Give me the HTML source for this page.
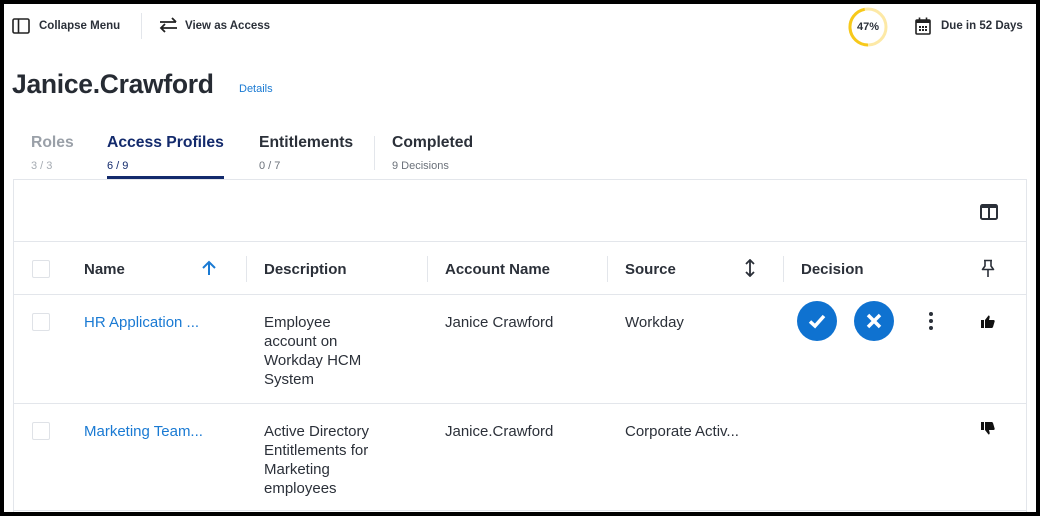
<!DOCTYPE html>
<html><head><meta charset="utf-8"><style>
*{margin:0;padding:0;box-sizing:border-box}
body{width:1040px;height:516px;overflow:hidden;background:#000;font-family:"Liberation Sans",sans-serif;color:#2b3039;position:relative}
#pg{position:absolute;left:4px;top:4px;width:1032px;height:508px;background:#fff;overflow:hidden}
.a{position:absolute;white-space:nowrap}
.b{font-weight:bold}
.hd{font-size:15px;font-weight:bold;color:#2b3039}
.cell{font-size:15px;line-height:19px;color:#2b3039}
.lnk{color:#1a7ad3;font-size:15px}
.vd{position:absolute;width:1px;background:#e3e6eb}
.hl{position:absolute;height:1px;background:#e3e6eb}
.cb{position:absolute;width:18px;height:18px;border:1px solid #dfe2e7;border-radius:2px}
.tab{font-size:15.7px;font-weight:bold}
</style></head><body><div id="pg">
<svg class="a" style="left:8px;top:14px" width="18" height="16" viewBox="0 0 18 16"><rect x="1" y="1" width="16" height="14" rx="1.5" fill="none" stroke="#222" stroke-width="1.6"/><line x1="6.5" y1="1" x2="6.5" y2="15" stroke="#222" stroke-width="1.6"/></svg>
<div class="a b" style="left:35px;top:16px;font-size:11.5px;color:#2b3039">Collapse Menu</div>
<div class="vd" style="left:137px;top:9px;height:26px"></div>
<svg class="a" style="left:155px;top:13px" width="19" height="16" viewBox="0 0 19 16"><path d="M1 5H17M13 1L17 5M18 11H2M6 7L2 11L6 15" fill="none" stroke="#222" stroke-width="1.8"/></svg>
<div class="a b" style="left:181px;top:16px;font-size:11.5px;color:#2b3039">View as Access</div>
<svg class="a" style="left:844px;top:3px" width="40" height="40" viewBox="0 0 40 40"><circle cx="20" cy="20" r="18" fill="none" stroke="#fde9a6" stroke-width="3"/><path d="M20 2A18 18 0 0 1 23.3 37.7" fill="none" stroke="#f7c91b" stroke-width="3" transform="rotate(180 20 20)"/></svg>
<div class="a b" style="left:851px;top:17px;font-size:11px;width:26px;text-align:center">47%</div>
<svg class="a" style="left:911px;top:13px" width="16" height="18" viewBox="0 0 16 18"><rect x="1" y="3" width="14" height="14" rx="1" fill="none" stroke="#222" stroke-width="1.6"/><rect x="1" y="3" width="14" height="3" fill="#222"/><line x1="4.5" y1="0.5" x2="4.5" y2="4" stroke="#222" stroke-width="1.6"/><line x1="11.5" y1="0.5" x2="11.5" y2="4" stroke="#222" stroke-width="1.6"/><g fill="#222"><rect x="4" y="9" width="2" height="2"/><rect x="7" y="9" width="2" height="2"/><rect x="10" y="9" width="2" height="2"/><rect x="4" y="12" width="2" height="2"/><rect x="7" y="12" width="2" height="2"/><rect x="10" y="12" width="2" height="2"/></g></svg>
<div class="a b" style="left:937px;top:16px;font-size:11.5px">Due in 52 Days</div>
<div class="a b" style="left:8px;top:65px;font-size:26.5px;color:#262b33;letter-spacing:-0.3px">Janice.Crawford</div>
<div class="a" style="left:235px;top:79px;font-size:11px;color:#1a7ad3">Details</div>
<div class="a tab" style="left:27px;top:130px;color:#9aa0a8">Roles</div>
<div class="a" style="left:27px;top:156px;font-size:11px;color:#a5abb2">3 / 3</div>
<div class="a tab" style="left:103px;top:130px;color:#132a6c">Access Profiles</div>
<div class="a" style="left:103px;top:156px;font-size:11px;color:#132a6c">6 / 9</div>
<div class="a" style="left:103px;top:172px;width:117px;height:3px;background:#132a6c"></div>
<div class="a tab" style="left:255px;top:130px">Entitlements</div>
<div class="a" style="left:255px;top:156px;font-size:11px;color:#6b717a">0 / 7</div>
<div class="vd" style="left:370px;top:132px;height:34px"></div>
<div class="a tab" style="left:388px;top:130px">Completed</div>
<div class="a" style="left:388px;top:156px;font-size:11px;color:#6b717a">9 Decisions</div>
<div class="a" style="left:9px;top:175px;width:1014px;height:340px;border:1px solid #e3e6eb"></div>
<svg class="a" style="left:976px;top:200px" width="18" height="16" viewBox="0 0 18 16"><rect x="1" y="1" width="16" height="14" rx="1.5" fill="none" stroke="#2b3039" stroke-width="2"/><rect x="1" y="1" width="16" height="3" fill="#2b3039"/><line x1="9" y1="1" x2="9" y2="15" stroke="#2b3039" stroke-width="2"/></svg>
<div class="hl" style="left:10px;top:237px;width:1012px"></div>
<div class="cb" style="left:28px;top:256px"></div>
<div class="a hd" style="left:80px;top:257px">Name</div>
<svg class="a" style="left:197px;top:256px" width="16" height="16" viewBox="0 0 16 16"><path d="M8 15V2M2 8L8 2L14 8" fill="none" stroke="#1a7ad3" stroke-width="2"/></svg>
<div class="vd" style="left:242px;top:252px;height:26px"></div>
<div class="a hd" style="left:260px;top:257px">Description</div>
<div class="vd" style="left:423px;top:252px;height:26px"></div>
<div class="a hd" style="left:441px;top:257px">Account Name</div>
<div class="vd" style="left:603px;top:252px;height:26px"></div>
<div class="a hd" style="left:621px;top:257px">Source</div>
<svg class="a" style="left:740px;top:255px" width="12" height="18" viewBox="0 0 12 18"><path d="M6 1V17M2 5L6 1L10 5M2 13L6 17L10 13" fill="none" stroke="#2b3039" stroke-width="1.8"/></svg>
<div class="vd" style="left:779px;top:252px;height:26px"></div>
<div class="a hd" style="left:797px;top:257px">Decision</div>
<svg class="a" style="left:977px;top:255px" width="14" height="19" viewBox="0 0 14 19"><path d="M3 1.5H11M4 1.5V7L1.5 10.5H12.5L10 7V1.5M7 10.5V18" fill="none" stroke="#2b3039" stroke-width="1.6" stroke-linejoin="round"/></svg>
<div class="hl" style="left:10px;top:290px;width:1012px"></div>
<div class="cb" style="left:28px;top:309px"></div>
<div class="a lnk" style="left:80px;top:310px">HR Application ...</div>
<div class="a cell" style="left:260px;top:309px;white-space:normal;width:140px">Employee<br>account on<br>Workday HCM<br>System</div>
<div class="a cell" style="left:441px;top:309px">Janice Crawford</div>
<div class="a cell" style="left:621px;top:309px">Workday</div>
<div class="a" style="left:793px;top:297px;width:40px;height:40px;border-radius:50%;background:#0f72d0"></div>
<svg class="a" style="left:793px;top:297px" width="40" height="40" viewBox="0 0 40 40"><path d="M13 20.5L18 25L27 15" fill="none" stroke="#fff" stroke-width="3.5"/></svg>
<div class="a" style="left:850px;top:297px;width:40px;height:40px;border-radius:50%;background:#0f72d0"></div>
<svg class="a" style="left:850px;top:297px" width="40" height="40" viewBox="0 0 40 40"><path d="M14 14L26 26M26 14L14 26" fill="none" stroke="#fff" stroke-width="3.5"/></svg>
<svg class="a" style="left:923px;top:307px" width="8" height="20" viewBox="0 0 8 20"><circle cx="4" cy="3" r="2" fill="#2b3039"/><circle cx="4" cy="10" r="2" fill="#2b3039"/><circle cx="4" cy="17" r="2" fill="#2b3039"/></svg>
<svg class="a" style="left:977px;top:311px" width="14" height="13" viewBox="0 0 14 13"><rect x="0" y="5" width="3" height="8" fill="#111"/><path d="M4 5L7.5 0.5C8.5 0.5 9 1.5 8.5 3L8 5H12.5C13.5 5 14 6 13.5 7L12 12C11.7 12.7 11 13 10.5 13H4Z" fill="#111"/></svg>
<div class="hl" style="left:10px;top:399px;width:1012px"></div>
<div class="cb" style="left:28px;top:418px"></div>
<div class="a lnk" style="left:80px;top:419px">Marketing Team...</div>
<div class="a cell" style="left:260px;top:418px;white-space:normal;width:140px">Active Directory<br>Entitlements for<br>Marketing<br>employees</div>
<div class="a cell" style="left:441px;top:418px">Janice.Crawford</div>
<div class="a cell" style="left:621px;top:418px">Corporate Activ...</div>
<svg class="a" style="left:977px;top:418px" width="14" height="13" viewBox="0 0 14 13"><g transform="translate(0 13) scale(1 -1)"><rect x="0" y="5" width="3" height="8" fill="#111"/><path d="M4 5L7.5 0.5C8.5 0.5 9 1.5 8.5 3L8 5H12.5C13.5 5 14 6 13.5 7L12 12C11.7 12.7 11 13 10.5 13H4Z" fill="#111"/></g></svg>
<div class="hl" style="left:10px;top:506px;width:1012px"></div>
</div></body></html>
